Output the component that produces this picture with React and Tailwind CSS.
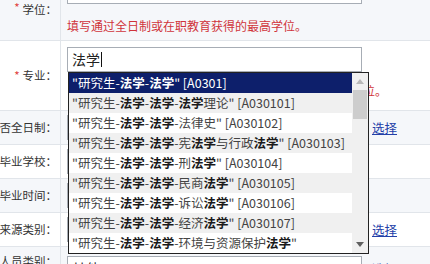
import React from "react";

const items = [
  '"研究生-法学-法学" [A0301]',
  '"研究生-法学-法学-法学理论" [A030101]',
  '"研究生-法学-法学-法律史" [A030102]',
  '"研究生-法学-法学-宪法学与行政法学" [A030103]',
  '"研究生-法学-法学-刑法学" [A030104]',
  '"研究生-法学-法学-民商法学" [A030105]',
  '"研究生-法学-法学-诉讼法学" [A030106]',
  '"研究生-法学-法学-经济法学" [A030107]',
  '"研究生-法学-法学-环境与资源保护法学" [A030108]',
];

function Hl({ text, selected }) {
  const parts = text.split("法学");
  return (
    <>
      {parts.map((p, i) => (
        <React.Fragment key={i}>
          {p}
          {i < parts.length - 1 && (
            <b className={selected ? "font-bold text-white" : "font-bold text-[#1a1a1a]"}>法学</b>
          )}
        </React.Fragment>
      ))}
    </>
  );
}

function Label({ children, req, top }) {
  return (
    <div
      className={`flex w-[61px] shrink-0 justify-end overflow-hidden whitespace-nowrap border-r border-[#e1e5ea] pr-[3px] text-[11.5px] ${
        top ? "items-start pt-[6px]" : "items-center"
      }`}
    >
      {req && <span className="mr-[3px] text-[#e0403a]">*</span>}
      {children}
    </div>
  );
}

function Box({ children }) {
  return (
    <div className="flex h-[25px] w-[295px] shrink-0 items-center border border-[#a7adb5] bg-white px-[4px] text-[14px] text-[#222]">
      {children}
    </div>
  );
}

function Link() {
  return <a className="ml-[10px] text-[12.5px] leading-[25px] text-[#2340a8] underline">选择</a>;
}

function Dropdown() {
  return (
    <div className="absolute left-[68px] top-[72px] flex h-[182px] w-[301px] border border-[#222] bg-white">
      <div className="flex-1 overflow-hidden">
        {items.map((t, i) => (
          <div
            key={i}
            className={`h-[20px] overflow-hidden pl-[3px] text-[12.5px] leading-[20px] ${
              i === 0 ? "bg-[#0d1f6b] text-white" : i % 2 ? "bg-[#f0f0f0] text-[#444]" : "bg-white text-[#444]"
            }`}
          >
            <Hl text={t} selected={i === 0} />
          </div>
        ))}
      </div>
      <div className="flex w-[16px] flex-col bg-[#f0f0f0]">
        <div className="flex h-[17px] items-center justify-center">
          <svg width="8" height="5" viewBox="0 0 8 5">
            <path d="M0 5 L4 0 L8 5 Z" fill="#b8b8b8" />
          </svg>
        </div>
        <div className="mx-[1px] h-[29px] bg-[#cdcdcd]" />
        <div className="flex-1" />
        <div className="flex h-[17px] items-center justify-center">
          <svg width="8" height="5" viewBox="0 0 8 5">
            <path d="M0 0 L8 0 L4 5 Z" fill="#606060" />
          </svg>
        </div>
      </div>
    </div>
  );
}

export default function App() {
  return (
    <div className="relative h-[264px] w-[430px] overflow-hidden bg-white font-['Noto_Sans_CJK_SC',sans-serif] text-[#333]">
      <div className="-mt-[25px]">
        <div className="flex border-b border-[#e1e5ea] bg-[#f5f7fa]">
          <Label req>
            <span className="relative top-[2px]">学位：</span>
          </Label>
          <div className="flex-1 pb-[6px] pl-[6px] pt-[4px]">
            <Box />
            <div className="mt-[14px] text-[12px] leading-[16px] text-[#d0343a]">
              填写通过全日制或在职教育获得的最高学位。
            </div>
          </div>
        </div>

        <div className="flex border-b border-[#e1e5ea] bg-white">
          <Label req>专业：</Label>
          <div className="flex-1 pb-[11px] pl-[6px] pt-[6px]">
            <Box>
              法学<span className="ml-[1px] inline-block h-[15px] w-[1px] bg-[#111]" />
            </Box>
            <div className="ml-[8px] mt-[11px] whitespace-nowrap text-[12px] leading-[16px] text-[#d0343a]">
              填写学位证书或毕业证书上所列的专业名称及其对应学位。
            </div>
          </div>
        </div>

        <div className="flex h-[34px] border-b border-[#e1e5ea] bg-[#f5f7fa]">
          <Label>是否全日制：</Label>
          <div className="flex flex-1 items-center pl-[6px]">
            <Box />
            <Link />
          </div>
        </div>

        <div className="flex h-[34px] border-b border-[#e1e5ea] bg-white">
          <Label>毕业学校：</Label>
          <div className="flex flex-1 items-center pl-[6px]">
            <Box />
          </div>
        </div>

        <div className="flex h-[34px] border-b border-[#e1e5ea] bg-[#f5f7fa]">
          <Label>毕业时间：</Label>
          <div className="flex flex-1 items-center pl-[6px]">
            <Box />
          </div>
        </div>

        <div className="flex h-[34px] border-b border-[#e1e5ea] bg-white">
          <Label>来源类别：</Label>
          <div className="flex flex-1 items-center pl-[6px]">
            <Box />
            <Link />
          </div>
        </div>

        <div className="flex h-[44px] bg-[#f5f7fa]">
          <Label top>人员类别：</Label>
          <div className="flex flex-1 items-start pl-[6px] pt-[9px]">
            <Box>其他</Box>
            <Link />
          </div>
        </div>
      </div>

      <Dropdown />
    </div>
  );
}
